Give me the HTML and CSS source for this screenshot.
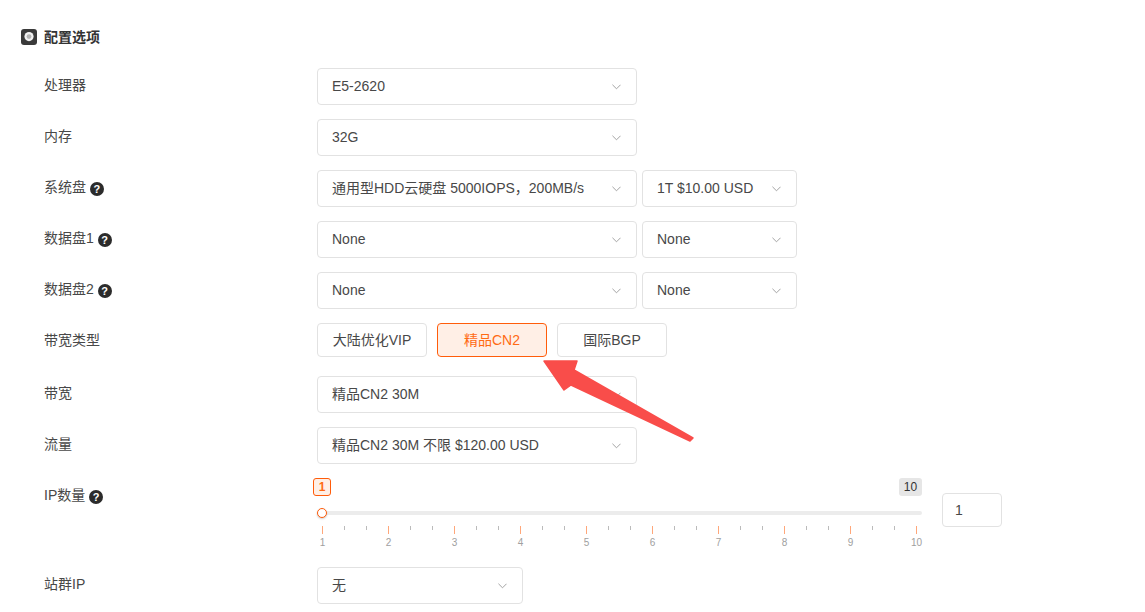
FILE: index.html
```html
<!DOCTYPE html>
<html>
	<head>
		<meta charset="utf-8">
		<meta name="viewport" content="width=device-width,initial-scale=1.0" />
		<title>配置选项</title>
		<link rel="stylesheet" href="styles.css">
	</head>
	<body>
		<div class="wrap">
			<h3 class="title">
				<svg class="titleIcon" viewBox="0 0 16 16">
					<rect width="16" height="16" rx="3" fill="#3a3a3a"/>
					<circle cx="8" cy="7.6" r="4.6" fill="#f2f2f2"/>
					<circle cx="8" cy="7.6" r="2.4" fill="#b5b5b5"/>
				</svg>
				配置选项
			</h3>

			<div class="row">
				<div class="label">处理器</div>
				<div class="field">
					<div class="select">E5-2620<svg class="arrow" viewBox="0 0 10 6"><path d="M.5.5 5 5 9.500.5"/></svg></div>
				</div>
			</div>
			<div class="row">
				<div class="label">内存</div>
				<div class="field">
					<div class="select">32G<svg class="arrow" viewBox="0 0 10 6"><path d="M.5.5 5 5 9.500.5"/></svg></div>
				</div>
			</div>
			<div class="row">
				<div class="label">系统盘 <span class="help">?</span></div>
				<div class="field">
					<div class="select">通用型HDD云硬盘 5000IOPS，200MB/s<svg class="arrow" viewBox="0 0 10 6"><path d="M.5.5 5 5 9.500.5"/></svg></div>
					<div class="select small">1T $10.00 USD<svg class="arrow" viewBox="0 0 10 6"><path d="M.5.5 5 5 9.500.5"/></svg></div>
				</div>
			</div>
			<div class="row">
				<div class="label">数据盘1 <span class="help">?</span></div>
				<div class="field">
					<div class="select">None<svg class="arrow" viewBox="0 0 10 6"><path d="M.5.5 5 5 9.500.5"/></svg></div>
					<div class="select small">None<svg class="arrow" viewBox="0 0 10 6"><path d="M.5.5 5 5 9.500.5"/></svg></div>
				</div>
			</div>
			<div class="row">
				<div class="label">数据盘2 <span class="help">?</span></div>
				<div class="field">
					<div class="select">None<svg class="arrow" viewBox="0 0 10 6"><path d="M.5.5 5 5 9.500.5"/></svg></div>
					<div class="select small">None<svg class="arrow" viewBox="0 0 10 6"><path d="M.5.5 5 5 9.500.5"/></svg></div>
				</div>
			</div>
			<div class="row btnRow">
				<div class="label">带宽类型</div>
				<div class="field btns">
					<div class="btn">大陆优化VIP</div>
					<div class="btn active">精品CN2</div>
					<div class="btn">国际BGP</div>
				</div>
			</div>
			<div class="row">
				<div class="label">带宽</div>
				<div class="field">
					<div class="select">精品CN2 30M<svg class="arrow" viewBox="0 0 10 6"><path d="M.5.5 5 5 9.500.5"/></svg></div>
				</div>
			</div>
			<div class="row">
				<div class="label">流量</div>
				<div class="field">
					<div class="select">精品CN2 30M 不限 $120.00 USD<svg class="arrow" viewBox="0 0 10 6"><path d="M.5.5 5 5 9.500.5"/></svg></div>
				</div>
			</div>
			<div class="row">
				<div class="label">IP数量 <span class="help">?</span></div>
				<div class="field">
					<div class="slider">
						<div class="badges">
							<span class="badge from">1</span>
							<span class="badge to">10</span>
						</div>
						<div class="track"><span class="handle"></span></div>
						<div class="ticks">
							<i class="major"></i><i></i><i></i>
							<i class="major"></i><i></i><i></i>
							<i class="major"></i><i></i><i></i>
							<i class="major"></i><i></i><i></i>
							<i class="major"></i><i></i><i></i>
							<i class="major"></i><i></i><i></i>
							<i class="major"></i><i></i><i></i>
							<i class="major"></i><i></i><i></i>
							<i class="major"></i><i></i><i></i>
							<i class="major"></i>
						</div>
						<div class="nums">
							<span>1</span><span>2</span><span>3</span><span>4</span><span>5</span>
							<span>6</span><span>7</span><span>8</span><span>9</span><span>10</span>
						</div>
					</div>
					<div class="num">1</div>
				</div>
			</div>
			<div class="row">
				<div class="label">站群IP</div>
				<div class="field">
					<div class="select mid">无<svg class="arrow" viewBox="0 0 10 6"><path d="M.5.5 5 5 9.500.5"/></svg></div>
				</div>
			</div>

			<!-- 红色标注箭头 -->
			<svg class="mark" viewBox="0 0 1145 612">
				<path d="M544 361 577 361 574 370 693 438 690 441 571 385 564 390Z" fill="#f94d4a" stroke="#f94d4a" stroke-width="1.500" stroke-linejoin="round"/>
			</svg>
		</div>
	</body>
</html>
```

FILE: styles.css
```css
*{
	padding: 0;
	margin: 0;
	box-sizing: border-box;
}
body{
	font-family: "Liberation Sans", "Noto Sans CJK SC", sans-serif;
	font-size: 14px;
	color: #484848;
	background: #fff;
}
.wrap{
	position: relative;
	width: 1145px;
	height: 612px;
	overflow: hidden;
	padding: 27px 0 0 21px;
}
.title{
	display: flex;
	align-items: center;
	gap: 7px;
	height: 18px;
	margin-bottom: 23px;
	font-size: 14px;
	font-weight: bold;
	color: #333;
}
.titleIcon{
	width: 16px;
	height: 16px;
	margin-top: 2px;
}
.row{
	display: flex;
	margin-bottom: 14px;
	padding-left: 23px;
}
.btnRow{
	margin-bottom: 19px;
}
.label{
	width: 273px;
	padding-top: 7px;
	line-height: 20px;
	flex-shrink: 0;
}
.help{
	display: inline-block;
	width: 14px;
	height: 14px;
	border-radius: 100%;
	background: #2b2b2b;
	color: #fff;
	font-size: 11px;
	font-weight: bold;
	line-height: 14px;
	text-align: center;
	vertical-align: -1px;
}
.field{
	display: flex;
	gap: 5px;
}
.select{
	position: relative;
	width: 320px;
	height: 37px;
	padding-left: 14px;
	border: 1px solid #e2e2e2;
	border-radius: 4px;
	line-height: 35px;
	white-space: nowrap;
}
.small{
	width: 155px;
}
.mid{
	width: 206px;
}
.arrow{
	position: absolute;
	right: 15px;
	top: 15px;
	width: 9px;
	height: 6px;
	fill: none;
	stroke: #999;
	stroke-width: 1;
}
.btns{
	gap: 10px;
}
.btn{
	width: 110px;
	height: 34px;
	border: 1px solid #e2e2e2;
	border-radius: 4px;
	line-height: 32px;
	text-align: center;
}
.btn.active{
	border-color: #ff5c0a;
	background: #ffefe6;
	color: #ff6a13;
}
.slider{
	width: 605px;
	height: 75px;
	margin-right: 15px;
}
.badges{
	display: flex;
	justify-content: space-between;
	height: 18px;
	margin-left: -4px;
}
.badge{
	min-width: 18px;
	height: 18px;
	border-radius: 3px;
	font-size: 12px;
	line-height: 16px;
	text-align: center;
}
.from{
	border: 1px solid #ff5c0a;
	background: #ffefe6;
	color: #ff6a13;
	font-weight: bold;
}
.to{
	width: 23px;
	background: #e6e6e6;
	color: #333;
	line-height: 18px;
}
.track{
	position: relative;
	height: 4px;
	margin-top: 15px;
	border-radius: 2px;
	background: #ececec;
}
.handle{
	position: absolute;
	left: 0;
	top: -3px;
	width: 10px;
	height: 10px;
	border: 1.5px solid #ff5c0a;
	border-radius: 100%;
	background: #fff;
	box-shadow: 0 1px 2px rgba(0,0,0,0.2);
}
.ticks{
	display: flex;
	justify-content: space-between;
	align-items: flex-start;
	height: 8px;
	margin-top: 11px;
	padding: 0 5px;
}
.ticks i{
	display: block;
	width: 1px;
	height: 4px;
	background: #bbb;
}
.ticks .major{
	height: 8px;
	background: #ffa77a;
}
.nums{
	display: flex;
	justify-content: space-between;
	margin-top: 4px;
	padding: 0 5px;
	font-size: 10px;
	line-height: 10px;
	color: #a0a0a0;
}
.nums span{
	display: flex;
	justify-content: center;
	width: 1px;
}
.num{
	width: 60px;
	height: 34px;
	margin-top: 15px;
	padding-left: 12px;
	border: 1px solid #e2e2e2;
	border-radius: 4px;
	line-height: 32px;
}
.mark{
	position: absolute;
	left: 0;
	top: 0;
	width: 1145px;
	height: 612px;
	pointer-events: none;
}
```
